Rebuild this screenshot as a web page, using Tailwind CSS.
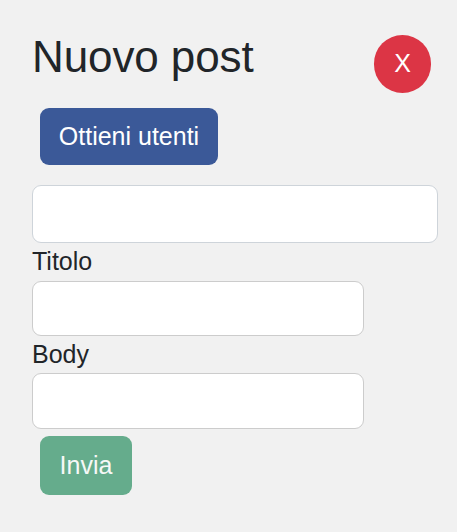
<!DOCTYPE html>
<html lang="it">
<head>
<meta charset="utf-8">
<title>Nuovo post</title>
<script src="https://cdn.jsdelivr.net/npm/@tailwindcss/browser@4"></script>
</head>
<body class="bg-[#f1f1f1] text-[#212529] font-['Liberation_Sans',Arial,sans-serif] text-[25px]">
<main class="h-[532px] pl-8 pr-[19px] pt-[35px] overflow-hidden">
  <header class="flex items-start justify-between pr-[7px] h-[73px]">
    <h1 class="text-[44px] leading-[44px] tracking-[-0.1px]">Nuovo post</h1>
    <button class="w-[57px] h-[58px] pb-0.5 rounded-full bg-[#dc3545] text-white flex items-center justify-center leading-none">X</button>
  </header>
  <button class="block ml-2 w-[178px] h-[57px] rounded-[9px] bg-[#3b5998] text-white">Ottieni utenti</button>
  <form>
    <input class="block mt-5 w-[406px] h-[58px] rounded-[9px] border border-[#ced4da] bg-white">
    <label class="block h-[38px] leading-[36px]">Titolo</label>
    <input class="block w-[332px] h-[55px] rounded-[9px] border border-[#cccccc] bg-white">
    <label class="block h-[37px] leading-[37px]">Body</label>
    <input class="block w-[332px] h-[56px] rounded-[9px] border border-[#cccccc] bg-white">
    <button class="block ml-2 mt-[7px] w-[92px] h-[59px] rounded-[9px] bg-[#65ac8c] text-[#f6f8f7]">Invia</button>
  </form>
</main>
</body>
</html>
